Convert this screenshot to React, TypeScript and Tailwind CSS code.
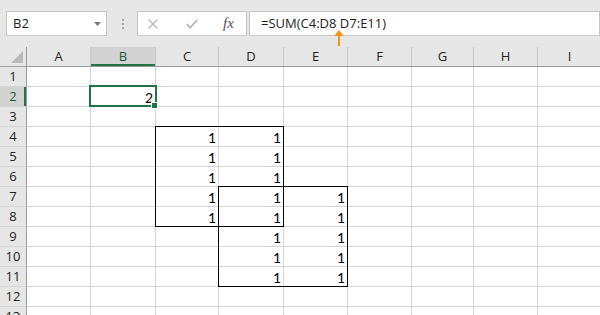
import React from 'react';

const COLS = [
  { name: 'A', w: 'w-[64px]' },
  { name: 'B', w: 'w-[65px]' },
  { name: 'C', w: 'w-[63px]' },
  { name: 'D', w: 'w-[65px]' },
  { name: 'E', w: 'w-[64px]' },
  { name: 'F', w: 'w-[64px]' },
  { name: 'G', w: 'w-[62px]' },
  { name: 'H', w: 'w-[64px]' },
  { name: 'I', w: 'w-[64px]' },
];

// cell values keyed like "C4"
const values: Record<string, string> = { B2: '2' };
for (let r = 4; r <= 8; r++) values['C' + r] = '1';
for (let r = 4; r <= 11; r++) values['D' + r] = '1';
for (let r = 7; r <= 11; r++) values['E' + r] = '1';

const ROWS = Array.from({ length: 13 }, (_, i) => i + 1);

const headerFont = { fontFamily: '"Open Sans", "Noto Sans", sans-serif' };
const cellFont = { fontFamily: 'Lato, "Liberation Sans", sans-serif' };

const Toolbar = () => (
  <div className="flex h-[47px] items-start pl-[6px] pt-[11px]" style={headerFont}>
    {/* name box */}
    <div className="relative flex h-[25px] w-[101px] items-center border border-[#c6c6c6] bg-white pl-[6px] text-[13px] text-[#222]">
      B2
      <svg className="absolute left-[87px] top-[10px]" width="7" height="4" viewBox="0 0 7 4">
        <path d="M0 0H7L3.5 4Z" fill="#7a7a7a" />
      </svg>
    </div>
    {/* grip dots */}
    <div className="ml-[15px] flex h-[25px] w-[2px] flex-col justify-center gap-[2px]">
      <div className="h-[2px] w-[2px] bg-[#a6a6a6]" />
      <div className="h-[2px] w-[2px] bg-[#a6a6a6]" />
      <div className="h-[2px] w-[2px] bg-[#a6a6a6]" />
    </div>
    {/* cancel / enter / fx */}
    <div className="ml-[13px] flex h-[25px] w-[110px] items-center border border-[#c6c6c6] bg-white">
      <svg className="ml-[10px]" width="10" height="10" viewBox="0 0 10 10">
        <path d="M0.5 0.5L9.5 9.5M9.5 0.5L0.5 9.5" stroke="#b8b8b8" strokeWidth="1.3" />
      </svg>
      <svg className="ml-[28px]" width="12" height="10" viewBox="0 0 12 10">
        <path d="M0.8 5.2L4.2 8.6L11.2 1" stroke="#b8b8b8" strokeWidth="1.8" fill="none" />
      </svg>
      <span
        className="ml-[25px] text-[15px] italic leading-none text-[#555]"
        style={{ fontFamily: '"Liberation Serif", serif' }}
      >
        fx
      </span>
    </div>
    {/* formula bar */}
    <div className="ml-[2px] flex h-[25px] flex-1 items-center border border-[#c6c6c6] bg-white pl-[11px] text-[13px] text-[#222]">
      =SUM(C4:D8 D7:E11)
    </div>
  </div>
);

const ColumnHeaders = () => (
  <div className="flex h-[20px] border-b border-[#9b9b9b]" style={headerFont}>
    <div className="relative w-[27px] shrink-0 border-r border-[#9b9b9b]">
      <svg className="absolute left-[11px] top-[4px]" width="12" height="12" viewBox="0 0 12 12">
        <path d="M12 0V12H0Z" fill="#b9b9b9" />
      </svg>
    </div>
    {COLS.map((c) => (
      <div
        key={c.name}
        className={
          c.name === 'B'
            ? `${c.w} flex shrink-0 items-center justify-center border-r border-[#c6c6c6] bg-[#d2d2d2] text-[13px] text-[#1e5a35] shadow-[inset_0_-2px_0_#217346]`
            : `${c.w} flex shrink-0 items-center justify-center border-r border-[#c6c6c6] text-[13px] text-[#222]`
        }
      >
        {c.name}
      </div>
    ))}
  </div>
);

const Row = ({ r }: { r: number }) => (
  <div className="flex h-[20px]">
    <div
      className={
        r === 2
          ? 'flex w-[27px] shrink-0 items-center justify-center border-b border-r border-b-[#d4d4d4] border-r-[#9b9b9b] bg-[#d2d2d2] text-[13px] text-[#1e5a35] shadow-[inset_-2px_0_0_#217346]'
          : 'flex w-[27px] shrink-0 items-center justify-center border-b border-r border-b-[#d4d4d4] border-r-[#9b9b9b] text-[13px] text-[#222]'
      }
      style={headerFont}
    >
      {r}
    </div>
    {COLS.map((c) => (
      <div
        key={c.name}
        className={`${c.w} flex shrink-0 items-center justify-end border-b border-r border-[#d4d4d4] bg-white pr-[2px] pt-[2px] text-[14px] text-black`}
        style={cellFont}
      >
        {values[c.name + r] ?? ''}
      </div>
    ))}
  </div>
);

export default function App() {
  return (
    <div className="relative h-[315px] w-[600px] overflow-hidden bg-[#e6e6e6]">
      <Toolbar />
      <ColumnHeaders />
      <div className="flex flex-col">
        {ROWS.map((r) => (
          <Row key={r} r={r} />
        ))}
      </div>

      {/* range borders C4:D8 and D7:E11 */}
      <div className="pointer-events-none absolute left-[155px] top-[126px] h-[101px] w-[129px] border border-black" />
      <div className="pointer-events-none absolute left-[218px] top-[186px] h-[101px] w-[130px] border border-black" />

      {/* active cell B2 */}
      <div className="pointer-events-none absolute left-[89px] top-[85px] h-[22px] w-[68px] border-2 border-[#217346]" />
      <div className="pointer-events-none absolute left-[151px] top-[102px] h-[7px] w-[7px] border border-white bg-[#217346]" />

      {/* orange pointer arrow */}
      <svg className="absolute left-[334px] top-[30px]" width="10" height="16" viewBox="0 0 10 16">
        <path d="M5 0L10 6H6V16H4V6H0Z" fill="#f7941d" />
      </svg>
    </div>
  );
}
